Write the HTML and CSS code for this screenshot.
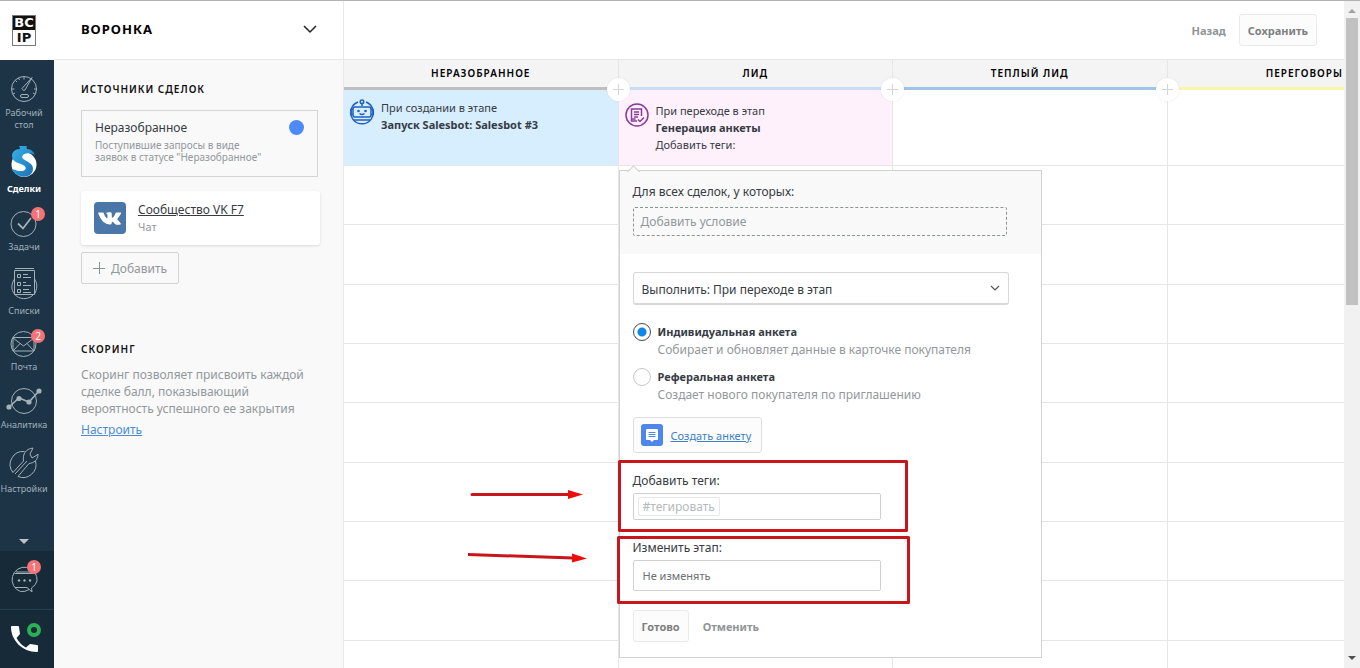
FILE: index.html
```html
<!DOCTYPE html>
<html lang="ru">
<head>
<meta charset="utf-8">
<title>Воронка</title>
<link rel="stylesheet" href="styles.css">
</head>
<body>
<div class="app">
  <nav class="nav">
    <a class="logo" href="#" aria-label="BC IP">
      <span class="logo-box"><b class="logo-top">BC</b><b class="logo-bottom">IP</b></span>
    </a>
    <div class="nav-list">
      <a class="nav-item" href="#">
        <svg class="ico" width="30" height="30" viewBox="0 0 30 30"><circle cx="15" cy="15" r="12.5"/><path d="M13 14.5l10-11-7 12.500a2 2 0 0 1-3-1.500z"/><path d="M3 15h2.500M25 15h2.500M6.500 6.500l1.500 1.500M15 3v2.500M4 20l2-1M26 20l-2-1M9.500 4l1 2"/><rect x="11.500" y="20.500" width="8" height="3" rx="1.500"/></svg>
        <span>Рабочий стол</span>
      </a>
      <a class="nav-item active" href="#">
        <svg width="30" height="36" viewBox="0 0 30 36"><defs><linearGradient id="deal" x1="0" y1="0" x2="1" y2="1"><stop offset="0" stop-color="#38b4e8"/><stop offset="1" stop-color="#1b6db5"/></linearGradient></defs><circle cx="15" cy="20.500" r="12.500" fill="#fff"/><path fill="url(#deal)" d="M11 5q0-2-1-3h8q-1 1 0 3c4 0 7 3 8 6-3-2-6-2-9-1.500-4 1-5 4-2 6 4 2.500 9 4 9 9.500 0 5-5 8.500-11 7.500-5-1-9-4-10.500-8 4 2 9 3.500 12.500 2 3-1.500 2-4.500-2-6-5-2-10-3-10-8.500C3 8 6 5 11 5z"/></svg>
        <span>Сделки</span>
      </a>
      <a class="nav-item" href="#">
        <svg class="ico" width="30" height="30" viewBox="0 0 30 30"><circle cx="14.500" cy="16" r="12.500"/><path stroke-width="1.800" d="M9 15.500l5 5L22 10"/></svg>
        <i class="count">1</i>
        <span>Задачи</span>
      </a>
      <a class="nav-item" href="#">
        <svg class="ico" width="30" height="36" viewBox="0 0 30 36"><path d="M5.500 4.500v24h20v-24zM6 2.500h19M5.500 13c-3.500 5-3.500 11 0 15 4 6 14 6 18.500 1M25.500 13c3 4 3 10 0 15"/><path d="M8.500 8.500h3v3h-3zM8.500 16.500h3v3h-3zM8.500 23.500h3v3h-3zM14 8.500h5M14 11.500h8M14 16.500h3M14 19.500h8M14 23.500h6M14 26.500h8"/></svg>
        <span>Списки</span>
      </a>
      <a class="nav-item" href="#">
        <svg class="ico" width="30" height="28" viewBox="0 0 30 28"><circle cx="14.500" cy="14" r="12.500"/><path d="M4 7.500h21v13.500H4zM4 8l10.500 8L25 8M4 21l7-7.500M25 21l-7-7.500"/></svg>
        <i class="count">2</i>
        <span>Почта</span>
      </a>
      <a class="nav-item" href="#">
        <svg class="ico" width="38" height="30" viewBox="0 0 38 30"><circle cx="19" cy="15" r="12.500"/><path stroke-width="1.600" d="M4 21l10-9 10 4L34 5"/><g class="dot"><circle cx="4" cy="21" r="2.600"/><circle cx="14" cy="12.500" r="2.600"/><circle cx="24" cy="16" r="2.600"/><circle cx="34" cy="5" r="2.600"/></g></svg>
        <span>Аналитика</span>
      </a>
      <a class="nav-item" href="#">
        <svg class="ico" width="32" height="36" viewBox="0 0 32 36"><path d="M16.500 7.500A13 13 0 0 0 5 28.500L15.500 17c-1-7 2-12 9.500-13l-3 6 2 4 5-3 1-1c0 6-4 9-9 9.500L10 32.500A13 13 0 0 0 27.500 17"/><path d="M7 30l12-13"/></svg>
        <span>Настройки</span>
      </a>
      <button class="nav-more" aria-label="Ещё"></button>
    </div>
    <a class="nav-bottom" href="#" aria-label="Чат">
      <svg class="ico" width="30" height="30" viewBox="0 0 30 30"><path d="M19 24.500A12.300 12.300 0 0 1 10.500 26.500A12.500 12.500 0 1 1 27 16q-1 4-5.500 7l.5 4-5-4.500H5M4.500 8.500h20M6 7h17"/><g class="dot"><circle cx="9" cy="15.500" r="1.200"/><circle cx="14.500" cy="15.500" r="1.200"/><circle cx="20" cy="15.500" r="1.200"/></g></svg>
      <i class="count">1</i>
    </a>
    <a class="nav-bottom phone" href="#" aria-label="Телефон">
      <svg width="32" height="32" viewBox="0 0 32 32"><path fill="#fff" d="M3 4h6q1 0 1 1l1 7-3.500 4q4 7 9.500 9.500l4-3.500 7 1q1 0 1 1v5q0 1-1 1C13 30 2 18 2 5q0-1 1-1z"/><circle cx="25" cy="8" r="5" fill="none" stroke="#2bb055" stroke-width="4"/></svg>
    </a>
  </nav>

  <aside class="side">
    <button class="side-title">Воронка
      <svg width="14" height="9" viewBox="0 0 14 9"><path fill="none" stroke="#222" stroke-width="1.500" d="M1 1l6 6 6-6"/></svg>
    </button>
    <div class="side-body">
      <h2 class="caption">Источники сделок</h2>
      <section class="source">
        <div>
          <h3 class="source-name">Неразобранное</h3>
          <p class="source-text">Поступившие запросы в виде<br>заявок в статусе "Неразобранное"</p>
        </div>
        <span class="source-dot"></span>
      </section>
      <section class="channel">
        <svg width="32" height="32" viewBox="0 0 32 32"><rect width="32" height="32" rx="4" fill="#4a76a8"/><path fill="#fff" d="M5 10.500h4q.600 0 .8.700c.8 2.500 2 4.500 3 5 .7 0 .7-.6.7-1.500 0-2-.2-3-1.500-3.400.8-1.200 4.500-1.200 5.400-.6.700.6.300 2.500.4 4.500.4 1.300 2 .1 3.700-4q.3-.7 1-.7h4.200c.8.1.4 1-.2 2l-3 4.300q-.5.700.2 1.300c2.500 2.200 4.600 4.600 2 4.600h-3.500c-1.200 0-2.200-2.500-3.500-3-.9-.1-1 .6-1.100 1.500-.1 1-.7 1.300-1.500 1.300-5.500 0-9-4-11.800-11-.2-.6 0-1 .7-1z"/></svg>
        <div>
          <a class="channel-name" href="#">Сообщество VK F7</a>
          <p class="channel-type">Чат</p>
        </div>
      </section>
      <button class="add"><svg width="12" height="12" viewBox="0 0 12 12"><path stroke="#8d9494" d="M0 6.500h12M6.500 0v12"/></svg>Добавить</button>
      <section class="scoring">
        <h2 class="caption">Скоринг</h2>
        <p class="scoring-text">Скоринг позволяет присвоить каждой<br>сделке балл, показывающий<br>вероятность успешного ее закрытия</p>
        <a class="link" href="#">Настроить</a>
      </section>
    </div>
  </aside>

  <main class="main">
    <header class="top">
      <button class="btn-text">Назад</button>
      <button class="btn">Сохранить</button>
    </header>
    <div class="board">
      <section class="col">
        <h2 class="col-head gray">Неразобранное</h2>
        <button class="plus" aria-label="Добавить этап"></button>
        <article class="card blue">
          <svg width="26" height="26" viewBox="0 0 26 26" fill="none" stroke="#1f5fc0" stroke-width="1.500"><path d="M9 3a11.300 11.300 0 1 0 8 0"/><circle cx="13" cy="2.800" r="1.800"/><path d="M13 4.500V7M6 8h14q2 0 2 2v6q0 2-2 2H6q-2 0-2-2v-6q0-2 2-2zM4 10.500H2v5h2M22 10.500h2v5h-2M5 21h16"/><path d="M10.500 14.500q2.500 2 5 0"/><circle cx="9.500" cy="12" r=".6"/><circle cx="16.500" cy="12" r=".6"/></svg>
          <div class="card-text"><p>При создании в этапе</p><b>Запуск Salesbot: Salesbot #3</b></div>
        </article>
        <div class="cells"><i></i><i></i><i></i><i></i><i></i><i></i><i></i><i></i></div>
      </section>
      <section class="col">
        <h2 class="col-head sky">Лид</h2>
        <button class="plus" aria-label="Добавить этап"></button>
        <article class="card pink">
          <svg width="26" height="26" viewBox="0 0 26 26" fill="none" stroke="#8b3a9b" stroke-width="1.500"><circle cx="13" cy="13" r="11"/><path d="M17.500 14V7h-10v12H13M10 10h5M10 12.500h5M10 15h4M7.500 17h4M14 17.500l2 2 4-4"/></svg>
          <div class="card-text"><p>При переходе в этап</p><b>Генерация анкеты</b><p>Добавить теги:</p></div>
        </article>
        <div class="cells"><i></i><i></i><i></i><i></i><i></i><i></i><i></i><i></i></div>

        <form class="popup">
          <div class="popup-head">
            <p class="label">Для всех сделок, у которых:</p>
            <button type="button" class="condition">Добавить условие</button>
          </div>
          <div class="popup-body">
            <div class="select-wrap">
              <select class="select" aria-label="Выполнить"><option>Выполнить: При переходе в этап</option></select>
              <svg width="10" height="7" viewBox="0 0 10 7"><path fill="none" stroke="#555" stroke-width="1.200" d="M1 1l4 4 4-4"/></svg>
            </div>
            <label class="radio"><input type="radio" name="kind" checked><span><b>Индивидуальная анкета</b><small>Собирает и обновляет данные в карточке покупателя</small></span></label>
            <label class="radio"><input type="radio" name="kind"><span><b>Реферальная анкета</b><small>Создает нового покупателя по приглашению</small></span></label>
            <a class="create" href="#">
              <svg width="22" height="22" viewBox="0 0 22 22"><rect width="22" height="22" rx="3" fill="#4f86ea"/><path fill="#fff" d="M6 5h10q1 0 1 1v9q0 1-1 1h-3l-2 2-2-2H6q-1 0-1-1V6q0-1 1-1z"/><path stroke="#4f86ea" d="M7.500 8.500h7M7.500 10.500h7M7.500 12.500h7"/></svg>
              <span>Создать анкету</span>
            </a>
            <label class="label field-label" for="tags">Добавить теги:</label>
            <div class="tags"><input id="tags" class="tag-input" type="text" placeholder="#тегировать"></div>
            <label class="label field-label" for="stage">Изменить этап:</label>
            <select id="stage" class="stage"><option>Не изменять</option></select>
            <div class="actions">
              <button type="button" class="btn">Готово</button>
              <button type="button" class="btn-text">Отменить</button>
            </div>
          </div>
        </form>
        <svg class="marks" width="450" height="160" viewBox="0 0 450 160">
          <g fill="none" stroke="#c8161b" stroke-width="3" stroke-linejoin="round" stroke-linecap="round"><rect x="151.500" y="7.500" width="287" height="69"/><rect x="150.500" y="83.500" width="290" height="65"/><path d="M4 40.500h97M0 100.500l105 3.500"/></g>
          <path fill="#ee0d0d" d="M100 36l15 4.500-15 4.500zM104 99.500l15 5-15 4z"/>
        </svg>
      </section>
      <section class="col">
        <h2 class="col-head azure">Теплый лид</h2>
        <button class="plus" aria-label="Добавить этап"></button>
        <div class="card"></div>
        <div class="cells"><i></i><i></i><i></i><i></i><i></i><i></i><i></i><i></i></div>
      </section>
      <section class="col">
        <h2 class="col-head yellow">Переговоры</h2>
        <div class="card"></div>
        <div class="cells"><i></i><i></i><i></i><i></i><i></i><i></i><i></i><i></i></div>
      </section>
    </div>
  </main>
  <div class="scroll"><i class="up"></i><i class="thumb"></i><i class="down"></i></div>
</div>
</body>
</html>
```
FILE: styles.css
```css
* { box-sizing: border-box; }
body { margin: 0; font-family: "Noto Sans", "Open Sans", sans-serif; font-size: 12px; line-height: 17px; color: #363b44; background: #fff; }
h2, h3, p { margin: 0; }
button, input, select { font: inherit; color: inherit; margin: 0; }
button { cursor: pointer; padding: 0; border: 0; background: none; }
svg { flex: none; display: block; }
.app { display: flex; height: 100vh; overflow: hidden; border-top: 1px solid #b2b2b2; }

/* main navigation */
.nav { flex: none; width: 54px; display: flex; flex-direction: column; background: #1d3447; }
.logo { height: 59px; background: #fff; display: flex; align-items: center; justify-content: center; padding-right: 6px; text-decoration: none; }
.logo-box { width: 24px; border: 1px solid #777; font-family: "DejaVu Sans", sans-serif; font-size: 13px; line-height: 14px; text-align: center; color: #111; background: #fff; }
.logo-box b { display: block; }
.logo-top { background: #111; color: #fff; }
.logo-bottom { line-height: 15px; }
.nav-list { flex: 1; display: flex; flex-direction: column; gap: 13px; padding-top: 14px; }
.nav-item { position: relative; display: flex; flex-direction: column; align-items: center; gap: 3px; padding-right: 6px; color: #9fb0ba; font-size: 9px; line-height: 12px; text-align: center; text-decoration: none; }
.nav-item span { width: 48px; }
.nav-item.active { color: #fff; font-weight: 700; }
.ico { fill: none; stroke: #a3b1b9; stroke-width: 1; }
.ico .dot { fill: #a3b1b9; stroke: none; }
.count { position: absolute; top: -1px; right: 9px; width: 14px; height: 14px; border-radius: 50%; background: #f57277; color: #fff; font: normal 10px/14px "Noto Sans", sans-serif; text-align: center; }
.nav-more { align-self: center; margin: auto 6px 7px 0; border: 5px solid transparent; border-top-color: #b9c3c9; border-bottom: 0; }
.nav-bottom { position: relative; height: 58px; display: flex; align-items: center; justify-content: center; padding-right: 4px; background: #172a38; }
.nav-bottom .count { top: 9px; right: 13px; }
.nav-bottom.phone { height: 59px; padding-bottom: 2px; border-top: 1px solid #234258; }

/* side column */
.side { flex: none; width: 290px; background: #f9f9f9; border-right: 1px solid #e8e8e8; }
.side-title { width: 100%; height: 59px; padding: 0 26px 2px 27px; display: flex; align-items: center; justify-content: space-between; background: #fff; border-bottom: 1px solid #e8e8e8; color: #000; font-size: 13px; font-weight: 700; letter-spacing: 1px; text-transform: uppercase; }
.side-body { padding: 21px 23px 0 27px; }
.caption { font-size: 10px; line-height: 17px; font-weight: 600; letter-spacing: 1px; text-transform: uppercase; color: #111; }
.source { margin: 12px 2px 0 0; height: 67px; padding: 8px 13px; display: flex; justify-content: space-between; border: 1px solid #d2d4d5; }
.source-name { font-size: 12px; font-weight: 400; line-height: 17px; }
.source-text { font-size: 10px; line-height: 12px; color: #92989b; margin-top: 3px; }
.source-dot { flex: none; width: 15px; height: 15px; margin-top: 1px; border-radius: 50%; background: #4c8bf7; }
.channel { margin-top: 14px; height: 54px; padding: 0 13px; display: flex; align-items: center; gap: 12px; background: #fff; border-radius: 3px; box-shadow: 0 1px 3px rgba(0, 0, 0, .12); }
.channel-name { color: #363b44; line-height: 18px; display: block; }
.channel-type { font-size: 11px; line-height: 16px; color: #92989b; }
.add { display: flex; align-items: center; gap: 6px; height: 32px; margin-top: 7px; padding: 0 11px; border: 1px solid #d2d4d5; border-radius: 2px; color: #92989b; }
.scoring { margin-top: 57px; }
.scoring-text { color: #92989b; margin-top: 8px; }
.link { display: inline-block; margin-top: 4px; color: #4c8bd7; }

/* top bar */
.main { flex: 1; min-width: 0; display: flex; flex-direction: column; }
.top { height: 58px; display: flex; align-items: center; justify-content: flex-end; gap: 13px; padding-right: 27px; }
.btn { height: 32px; padding: 0 8px; border: 1px solid #e8eaeb; border-radius: 3px; background: #fcfcfc; color: #7c8081; font-size: 11px; font-weight: 700; }
.btn-text { color: #8f9596; font-size: 11px; font-weight: 700; }

/* board */
.board { flex: 1; display: flex; overflow: hidden; border-top: 1px solid #e8e8e8; }
.col { position: relative; flex: 0 0 27.45%; display: flex; flex-direction: column; border-right: 1px solid #e6e6e6; }
.col-head { height: 30px; background: #f4f4f4; border-bottom: 3px solid; color: #000; text-align: center; font-size: 10px; line-height: 26px; font-weight: 600; letter-spacing: 1px; text-transform: uppercase; }
.gray { border-color: #bfbfbf; }
.sky { border-color: #c9def4; }
.azure { border-color: #9fc6ea; }
.yellow { border-color: #f8f6a8; }
.plus { position: absolute; z-index: 2; top: 18px; right: -12px; width: 23px; height: 23px; border-radius: 50%; background: linear-gradient(#d5d5d5, #d5d5d5) center / 11px 1px no-repeat, linear-gradient(#d5d5d5, #d5d5d5) center / 1px 11px no-repeat, #fff; box-shadow: 0 0 2px rgba(0, 0, 0, .1); }
.card { height: 76px; padding: 9px 5px; display: flex; align-items: flex-start; gap: 6px; border-bottom: 1px solid #e6e6e6; }
.card-text { font-size: 11px; line-height: 17px; }
.card-text b { display: block; }
.blue { background: #d7eefe; }
.pink { background: #fef1fc; padding-top: 12px; }
.cells { flex: 1; display: grid; grid-template-rows: repeat(8, 13fr) 6fr; }
.cells i { border-bottom: 1px solid #e6e6e6; }

/* settings popup */
.popup { position: absolute; z-index: 3; top: 110px; left: 0; width: 423px; background: #fff; border: 1px solid #cfd3d3; }
.popup::before { content: ""; position: absolute; top: -4px; left: 9px; width: 8px; height: 8px; background: #f9f9f9; border: solid #cfd3d3; border-width: 1px 0 0 1px; transform: rotate(45deg); }
.popup-head { height: 83px; padding: 12px 34px 0 13px; background: #f9f9f9; }
.label { display: block; font-size: 12px; line-height: 17px; }
.condition { display: block; width: 100%; height: 29px; margin-top: 7px; padding: 0 7px; border: 1px dashed #8d9494; border-radius: 2px; text-align: left; color: #92989b; }
.popup-body { padding: 18px 32px 15px 13px; }
.select-wrap { display: grid; align-items: center; }
.select-wrap > * { grid-area: 1 / 1; }
.select-wrap svg { justify-self: end; margin-right: 9px; pointer-events: none; }
.select { appearance: none; width: 100%; height: 33px; padding: 2px 8px 0; border: 1px solid #d6d8d9; border-bottom-width: 2px; border-radius: 3px; background: #fff; }
.radio { display: flex; gap: 7px; margin-top: 9px; }
.select-wrap + .radio { margin-top: 18px; }
.radio input { appearance: none; flex: none; width: 18px; height: 18px; border: 1px solid #c4c8ca; border-radius: 50%; background: #fff; }
.radio input:checked { border-color: #3f4a52; background: radial-gradient(circle, #0f87e8 4px, #fff 5px); }
.radio b, .radio small { display: block; line-height: 18px; }
.radio b { font-size: 11px; }
.radio small { font-size: 12px; color: #92989b; }
.create { width: max-content; height: 36px; margin-top: 13px; padding: 0 10px 0 7px; display: flex; align-items: center; gap: 8px; border: 1px solid #dcdfe0; border-radius: 3px; background: #fcfcfc; color: #3f7fc6; font-size: 11px; }
.field-label { margin: 19px 0 4px; }
.tags { width: 248px; height: 27px; padding: 3px 4px; display: flex; border: 1px solid #ced1d2; border-radius: 2px; }
.tag-input { width: 82px; padding: 0 4px; border: 1px solid #e6e8e8; border-radius: 2px; outline: 0; }
.tag-input::placeholder { color: #b5b9ba; opacity: 1; }
.stage { appearance: none; display: block; width: 248px; height: 31px; padding: 0 9px; border: 1px solid #ced1d2; border-radius: 2px; background: #fff; color: #6b7075; font-size: 11px; }
.actions { display: flex; gap: 14px; margin-top: 19px; }
.marks { position: absolute; z-index: 4; top: 394px; left: -151px; pointer-events: none; }

/* page scrollbar */
.scroll { flex: none; width: 16px; display: flex; flex-direction: column; align-items: center; background: #f1f1f1; }
.up, .down { border: 4px solid transparent; }
.up { margin-top: 8px; border-top: 0; border-bottom-color: #a0a0a0; }
.thumb { width: 12px; height: 43%; margin-top: 5px; background: #c1c1c1; }
.down { margin: auto 0 8px; border-bottom: 0; border-top-color: #505050; }
```
